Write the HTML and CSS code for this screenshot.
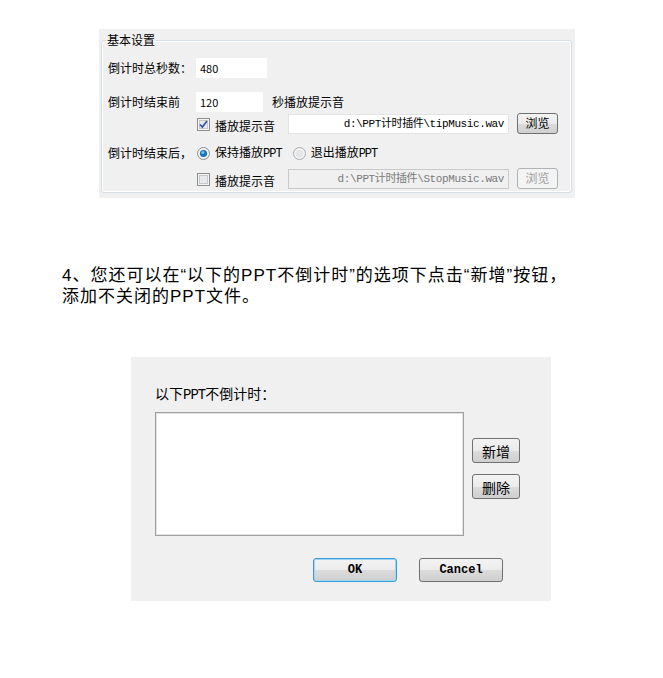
FILE: index.html
```html
<!DOCTYPE html>
<html lang="zh-CN">
  <head>
    <meta charset="UTF-8" />
    <meta name="viewport" content="width=device-width, initial-scale=1.0" />
    <title>PPT计时插件设置</title>
    <link rel="stylesheet" href="styles.css">
  </head>
  <body>
    <!-- 基本设置 -->
    <div class="settings">
      <fieldset class="group">
        <legend>基本设置</legend>

        <div class="row row-total">
          <span class="label">倒计时总秒数：</span>
          <span class="field num-total">480</span>
        </div>

        <div class="row row-before">
          <span class="label">倒计时结束前</span>
          <span class="field num-before">120</span>
          <span class="suffix">秒播放提示音</span>
        </div>

        <div class="row row-tip">
          <span class="label"></span>
          <svg class="check" width="13" height="13" viewBox="0 0 13 13">
            <rect x="0.5" y="0.5" width="12" height="12" fill="#f4f4f4" stroke="#8e8f8f" />
            <rect x="2.5" y="2.5" width="8" height="8" fill="#e6e8ea" stroke="#c6c8ca" />
            <path d="M3 6.5 L5.3 9 L10 3" fill="none" stroke="#3f57a8" stroke-width="1.8" />
          </svg>
          <span class="opt">播放提示音</span>
          <span class="field path">d:\PPT计时插件\tipMusic.wav</span>
          <span class="btn">浏览</span>
        </div>

        <div class="row row-end">
          <span class="label">倒计时结束后，</span>
          <svg class="radio" width="13" height="13" viewBox="0 0 13 13">
            <circle cx="6.5" cy="6.5" r="6" fill="#f2f2f2" stroke="#8e8f8f" />
            <circle cx="6.5" cy="6.5" r="3.6" fill="#1c72b8" />
            <circle cx="5.8" cy="5.6" r="1.5" fill="#7cc3f0" />
          </svg>
          <span class="opt-radio">保持播放<span class="mono">PPT</span></span>
          <svg class="radio" width="13" height="13" viewBox="0 0 13 13">
            <circle cx="6.5" cy="6.5" r="6" fill="#f2f2f2" stroke="#a9abad" />
            <circle cx="6.5" cy="6.5" r="3.8" fill="#e3e5e7" />
          </svg>
          <span class="opt-radio">退出播放<span class="mono">PPT</span></span>
        </div>

        <div class="row row-stop">
          <span class="label"></span>
          <svg class="check" width="13" height="13" viewBox="0 0 13 13">
            <rect x="0.5" y="0.5" width="12" height="12" fill="#f4f4f4" stroke="#8e8f8f" />
            <rect x="2.5" y="2.5" width="8" height="8" fill="#e6e8ea" stroke="#c6c8ca" />
          </svg>
          <span class="opt">播放提示音</span>
          <span class="field path disabled">d:\PPT计时插件\StopMusic.wav</span>
          <span class="btn disabled">浏览</span>
        </div>
      </fieldset>
    </div>

    <p class="note">
      4、您还可以在“以下的PPT不倒计时”的选项下点击“新增”按钮，<br />
      添加不关闭的PPT文件。
    </p>

    <!-- 不倒计时列表 -->
    <div class="dialog">
      <div class="dialog-title">以下<span class="mono">PPT</span>不倒计时：</div>
      <div class="list-row">
        <div class="listbox"></div>
        <div class="side-buttons">
          <span class="btn btn-side">新增</span>
          <span class="btn btn-side">删除</span>
        </div>
      </div>
      <div class="footer">
        <span class="btn btn-footer default">OK</span>
        <span class="btn btn-footer">Cancel</span>
      </div>
    </div>
  </body>
</html>
```

FILE: styles.css
```css
* {
  box-sizing: border-box;
}
body {
  margin: 0;
  background: #fff;
  color: #000;
  font-family: "Noto Sans CJK SC", sans-serif;
}
.mono {
  font-family: "Liberation Mono", monospace;
  letter-spacing: -1px;
}

/* top settings panel */
.settings {
  width: 476px;
  height: 169px;
  margin: 29px 0 0 99px;
  padding: 4px 3px 0 2px;
  background: #f0f0f0;
  font-size: 12px;
}
.group {
  height: 160px;
  margin: 0;
  padding: 0 0 0 6px;
  border: 1px solid #d5dfe5;
  border-radius: 3px;
  box-shadow: inset 0 0 0 1px #fff;
}
.group legend {
  margin-left: -2px;
  padding: 0 1px;
  line-height: 14px;
}
.row {
  display: flex;
  align-items: center;
  height: 20px;
  line-height: 14px;
}
.row-total {
  margin-top: 11px;
}
.row-before {
  margin-top: 14px;
}
.row-tip {
  margin-top: 2px;
}
.row-end {
  margin-top: 9px;
}
.row-stop {
  margin-top: 6px;
}
.label {
  width: 88px;
  flex: none;
}
.field {
  height: 20px;
  background: #fff;
  font-size: 11px;
  line-height: 20px;
  padding: 0 4px;
}
.num-total {
  width: 71px;
}
.num-before {
  width: 67px;
}
.suffix {
  margin-left: 9px;
}
.check {
  margin-left: 1px;
  flex: none;
}
.opt {
  width: 73px;
  margin-left: 5px;
  padding-top: 4px;
}
.path {
  width: 221px;
  border: 1px solid #e3e3e3;
  font-family: "Liberation Mono", "Noto Sans CJK SC", monospace;
  text-align: right;
  letter-spacing: -0.4px;
  line-height: 18px;
}
.path.disabled {
  background: #f0f0f0;
  border-color: #c9c9c9;
  color: #7a7a7a;
}
.radio {
  margin-left: 1px;
  flex: none;
}
.opt-radio {
  margin-left: 5px;
  margin-right: 10px;
}

.btn {
  display: inline-flex;
  align-items: center;
  justify-content: center;
  border: 1px solid #707070;
  border-radius: 3px;
  background: linear-gradient(#f3f3f3, #ebebeb 50%, #dcdcdc 51%, #cfcfcf);
  color: #000;
}
.row .btn {
  width: 41px;
  height: 21px;
  margin-left: 8px;
  margin-top: -2px;
}
.btn.disabled {
  border-color: #adb2b5;
  background: #f4f4f4;
  color: #a0a0a0;
}

/* paragraph */
.note {
  margin: 67px 0 0 62px;
  font-family: "Liberation Sans", "Noto Sans CJK SC", sans-serif;
  font-size: 17px;
  line-height: 21px;
  letter-spacing: 1px;
}

/* list dialog */
.dialog {
  width: 420px;
  height: 244px;
  margin: 50px 0 0 131px;
  padding: 28px 0 0 24px;
  background: #f0f0f0;
  font-size: 14px;
}
.dialog-title {
  height: 16px;
  line-height: 16px;
  margin-bottom: 11px;
}
.list-row {
  display: flex;
}
.listbox {
  width: 309px;
  height: 124px;
  background: #fff;
  border: 1px solid #a0a0a0;
  box-shadow: inset 0 0 0 1px #e2e2e2;
}
.side-buttons {
  display: flex;
  flex-direction: column;
  gap: 11px;
  margin-left: 8px;
  padding-top: 26px;
}
.btn-side {
  width: 48px;
  height: 25px;
  font-size: 14px;
}
.footer {
  display: flex;
  gap: 22px;
  margin: 22px 0 0 158px;
}
.btn-footer {
  width: 84px;
  height: 24px;
  font-family: "Liberation Mono", monospace;
  font-size: 12px;
  font-weight: bold;
}
.btn-footer.default {
  border-color: #3c9bd6;
  box-shadow: inset 0 0 0 1px #9fd6f5;
}
```
